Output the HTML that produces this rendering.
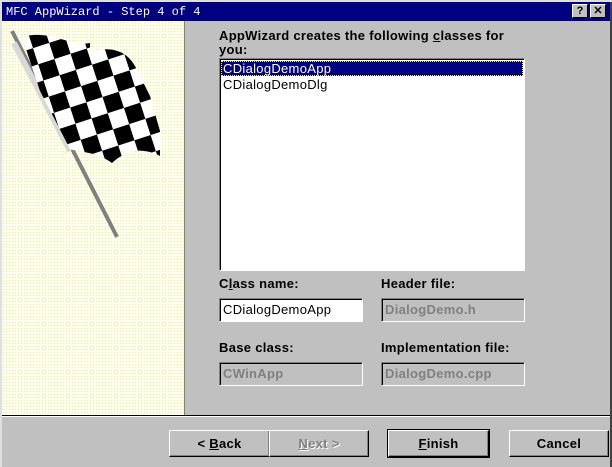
<!DOCTYPE html>
<html><head><style>
*{margin:0;padding:0;box-sizing:border-box}
body{width:612px;height:467px;background:#c0c0c0;font-family:"Liberation Sans",sans-serif;font-weight:bold;font-size:13px;letter-spacing:0.3px;position:relative;overflow:hidden}
.a{position:absolute}
.title{left:0;top:0;width:612px;height:21px;background:#000080;color:#fff;font-family:"Liberation Mono",monospace;font-weight:normal;font-size:12px;letter-spacing:0;line-height:21px;padding-left:4px;border-top:2px solid #dfdfdf;border-left:2px solid #dfdfdf}
.tb{top:4px;width:16px;height:14px;background:#c0c0c0;border:1px solid;border-color:#fff #000 #000 #fff;color:#000;font-size:11px;letter-spacing:0;line-height:12px;text-align:center}
.sunk{border:1px solid;border-color:#808080 #fff #fff #808080;box-shadow:inset 1px 1px 0 #000}
.lbl{color:#000}
.dis{color:#808080;font-weight:bold;padding:3px 0 0 3px}
.btn{top:430px;height:27px;border:1px solid;border-color:#fff #000 #000 #fff;box-shadow:inset -1px -1px 0 #808080;text-align:center;line-height:25px;font-size:13px}
</style></head><body>
<div class="a title">MFC AppWizard - Step 4 of 4</div>
<div class="a tb" style="left:572px">?</div>
<div class="a tb" style="left:590px">✕</div>
<div class="a" style="left:0;top:21px;width:2px;height:446px;background:#dfdfdf"></div>
<div class="a" style="left:610px;top:2px;width:2px;height:465px;background:#404040"></div>
<div class="a" style="left:2px;top:21px;width:183px;height:395px;background:#fffff4;border-right:1px solid #808080;background-image:radial-gradient(#f4f070 0.6px,transparent 0.8px);background-size:3px 3px"></div>
<svg class="a" style="left:0;top:21px" width="185" height="230">
<line x1="12" y1="10" x2="117" y2="216" stroke="#808080" stroke-width="4"/>
<line x1="14" y1="22" x2="70" y2="130" stroke="#d8d8d8" stroke-width="6"/>
<defs><pattern id="c" width="34" height="34" patternUnits="userSpaceOnUse" patternTransform="rotate(-18) translate(6 2)"><rect width="34" height="34" fill="#fff"/><rect width="17" height="17" fill="#000"/><rect x="17" y="17" width="17" height="17" fill="#000"/></pattern></defs>
<path d="M22 16 C50 8 70 26 90 22 L90 30 C110 26 125 28 135 45 L150 75 L160 110 L160 135 C140 125 125 130 112 142 C95 130 82 132 70 128 L40 70 Z" fill="url(#c)"/>
</svg>
<div class="a lbl" style="left:219px;top:29px;line-height:14px">AppWizard creates the following <u>c</u>lasses for<br>you:</div>
<div class="a sunk" style="left:219px;top:58px;width:306px;height:213px;background:#fff"></div>
<div class="a" style="left:221px;top:61px;width:302px;height:15px;background:#000080;color:#fff;font-weight:normal;line-height:15px;padding-left:2px;outline:1px dotted #ff0;outline-offset:-1px">CDialogDemoApp</div>
<div class="a" style="left:223px;top:77px;font-weight:normal;line-height:15px">CDialogDemoDlg</div>
<div class="a lbl" style="left:219px;top:276px">C<u>l</u>ass name:</div>
<div class="a lbl" style="left:381px;top:276px">Header file:</div>
<div class="a sunk" style="left:219px;top:298px;width:144px;height:24px;background:#fff;font-weight:normal;padding:3px 0 0 3px">CDialogDemoApp</div>
<div class="a sunk dis" style="left:381px;top:298px;width:144px;height:24px">DialogDemo.h</div>
<div class="a lbl" style="left:219px;top:340px">Base class:</div>
<div class="a lbl" style="left:381px;top:340px">Implementation file:</div>
<div class="a sunk dis" style="left:219px;top:362px;width:144px;height:24px">CWinApp</div>
<div class="a sunk dis" style="left:381px;top:362px;width:144px;height:24px">DialogDemo.cpp</div>
<div class="a" style="left:2px;top:415px;width:608px;height:2px;background:#000;border-bottom:1px solid #fff"></div>
<div class="a btn" style="left:169px;width:101px">&lt; <u>B</u>ack</div>
<div class="a btn" style="left:269px;width:100px;color:#808080;text-shadow:1px 1px 0 #fff"><u>N</u>ext &gt;</div>
<div class="a btn" style="left:388px;width:101px;outline:1px solid #000"><u>F</u>inish</div>
<div class="a btn" style="left:509px;width:100px">Cancel</div>
</body></html>
